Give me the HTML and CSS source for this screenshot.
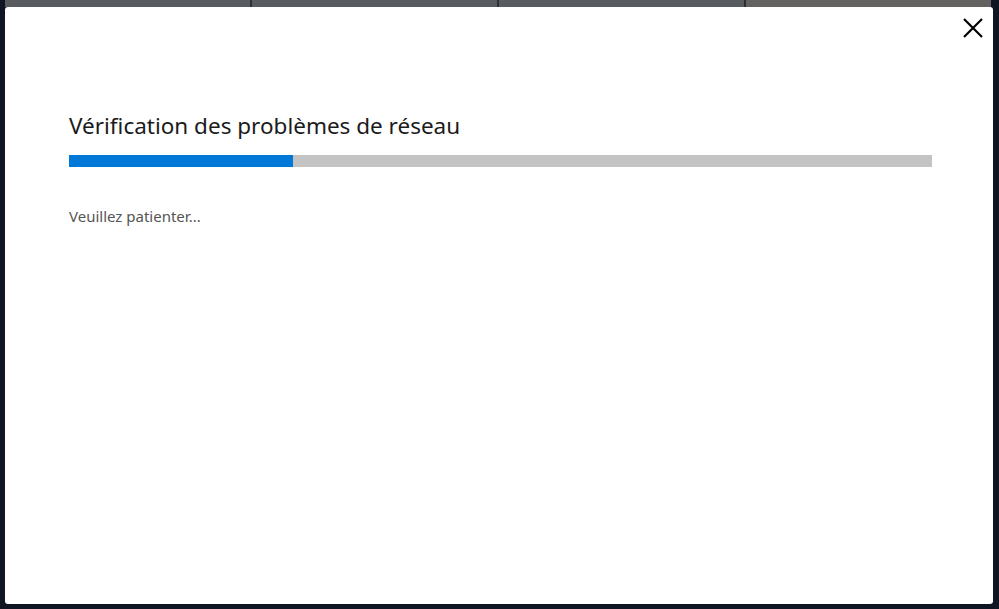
FILE: index.html
```html
<!DOCTYPE html>
<html>
<head>
<meta charset="utf-8">
<link rel="stylesheet" href="styles.css">
</head>
<body>
<div class="tabs">
  <div class="tab"></div>
  <div class="tab"></div>
  <div class="tab"></div>
  <div class="tab tab-last"></div>
</div>

<!-- dialog de diagnostic -->
<div class="dialog">
  <div class="dialog-top">
    <span class="close">
      <svg width="20" height="20" viewBox="0 0 20 20"><path d="M1 1 L19 19 M19 1 L1 19" stroke="#000" stroke-width="2.2" fill="none"/></svg>
    </span>
  </div>
  <div class="dialog-body">
    <h1 class="title">Vérification des problèmes de réseau</h1>
    <div class="progress"><div class="progress-fill" style="width: 26%"></div></div>
    <p class="status">Veuillez patienter...</p>
  </div>
</div>
</body>
</html>
```

FILE: styles.css
```css
html, body {
  margin: 0;
  height: 100%;
}

body {
  background-color: #0f1523;
  padding: 0 6px 5px 5px;
  box-sizing: border-box;
  display: flex;
  flex-direction: column;
  font-family: 'Noto Sans', 'Open Sans', Arial, sans-serif;
}

.tabs {
  display: flex;
  height: 7px;
  margin-right: 2px;
}

.tab {
  flex: 1;
  background-color: #585b60;
  border-right: 2px solid #2b2f36;
}

.tab-last {
  background-color: #646261;
  border-right: none;
}

.dialog {
  flex: 1;
  background-color: #fff;
  border-radius: 3px;
  display: flex;
  flex-direction: column;
}

.dialog-top {
  display: flex;
  justify-content: flex-end;
  padding: 11px 10px 0 0;
  height: 28px;
}

.close {
  display: block;
  width: 20px;
  height: 20px;
  cursor: pointer;
}

.dialog-body {
  padding: 0 61px 0 64px;
}

.title {
  font-size: 22.5px;
  font-weight: normal;
  color: #1b1b1b;
  margin: 66px 0 0 0;
  line-height: 28px;
}

.progress {
  height: 12px;
  background-color: #c3c3c3;
  margin-top: 15px;
}

.progress-fill {
  height: 100%;
  background-color: #0078d7;
}

.status {
  font-size: 15px;
  color: #555;
  margin: 39px 0 0 0;
  line-height: 20px;
}
```
